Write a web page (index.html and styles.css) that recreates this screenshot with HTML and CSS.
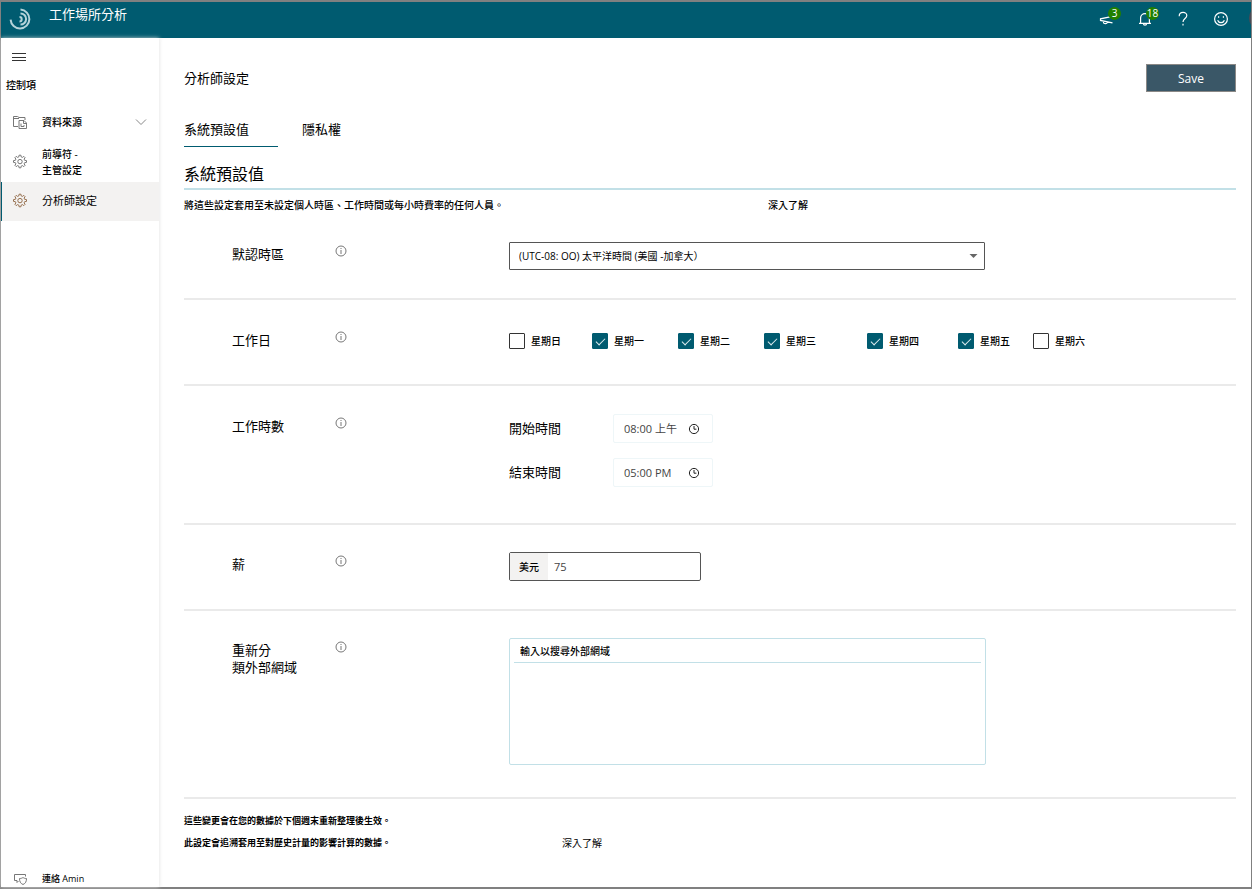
FILE: index.html
```html
<!DOCTYPE html>
<html lang="zh-Hant">
<head>
<meta charset="utf-8">
<meta name="viewport" content="width=device-width, initial-scale=1">
<title>工作場所分析</title>
<link rel="stylesheet" href="styles.css">
</head>
<body>
<svg class="defs" aria-hidden="true">
  <symbol id="gear" viewBox="0 0 16 16"><path d="M6.8 2.9 7.1 1.2h1.8l.3 1.7 1.2.5 1.4-1 1.3 1.3-1 1.4.5 1.2 1.9.3v1.8l-1.9.3-.5 1.2 1 1.4-1.3 1.3-1.4-1-1.2.5-.3 1.7H7.1l-.3-1.7-1.2-.5-1.4 1-1.3-1.3 1-1.4-.5-1.2-1.9-.3V6.6l1.9-.3.5-1.2-1-1.4 1.3-1.3 1.4 1z"/><circle cx="8" cy="7.6" r="2.2"/></symbol>
  <symbol id="info" viewBox="0 0 12 12"><circle cx="6" cy="6" r="5"/><path d="M6 5v4M6 3v1"/></symbol>
  <symbol id="clock" viewBox="0 0 12 12"><circle cx="6" cy="6" r="4.6"/><path d="M6 3v3.2h2.4"/></symbol>
</svg>
<div class="app">
  <header class="topbar">
    <svg class="logo" viewBox="0 0 22 22" aria-hidden="true"><path d="M11.500 1.600a9.400 9.400 0 1 1-9.900 10"/><path d="M11.500 5.400a5.600 5.600 0 0 1 0 11.200"/><path d="M10.500 9a2.200 2.200 0 0 1 0 4.400"/></svg>
    <span class="product">工作場所分析</span>
    <nav class="actions" aria-label="工具">
      <button class="action" aria-label="公告"><svg viewBox="0 0 16 16"><path d="M13.500 11.800 1.500 9.400V7.800l12-2.400M4.500 10v1.400c0 1.400 3.600 1.800 3.800-.2"/></svg><span class="badge">3</span></button>
      <button class="action" aria-label="通知"><svg viewBox="0 0 16 16"><path d="M2 12.400h12M3.600 12.200V7a4.400 4.400 0 0 1 8.800 0v5.200M6.400 12.600a1.600 1.600 0 0 0 3.200 0"/></svg><span class="badge">18</span></button>
      <button class="action" aria-label="說明"><svg viewBox="0 0 16 16"><path d="M4.200 5.200c0-5 7.600-5 7.600-.6C11.800 7.400 8 7.600 8 11M8 12.800v1.700"/></svg></button>
      <button class="action" aria-label="意見反應"><svg viewBox="0 0 16 16"><circle cx="8" cy="8" r="6.400"/><path d="M4.600 9.200c1.200 3.200 5.600 3.200 6.800 0M5.600 5.200v1.600M10.400 5.200v1.600"/></svg></button>
    </nav>
    <span class="avatar"></span>
  </header>
  <div class="body">
    <aside class="sidebar">
      <button class="menu" aria-label="選單"><svg viewBox="0 0 14 10"><path d="M0 1.500h14M0 5.500h14M0 8.500h14"/></svg></button>
      <p class="group">控制項</p>
      <nav class="nav">
        <a class="item" href="#"><svg class="icon" viewBox="0 0 16 16"><path d="M6 12.500H1.500v-10h4l1.500 1h6V6M1.500 4.500H7"/><path d="M7 6.500h5l2.500 2.500v5.500H7zM11.500 6.500v3h3M9 12.500v-3M9 12.500h3v-1.500"/></svg><span>資料來源</span><svg class="chevron" viewBox="0 0 12 8"><path d="m1 1.500 5 5 5-5"/></svg></a>
        <a class="item" href="#"><svg class="icon"><use href="#gear"/></svg><span>前導符 -<br>主管設定</span></a>
        <a class="item current" href="#" aria-current="page"><svg class="icon"><use href="#gear"/></svg><span>分析師設定</span></a>
      </nav>
      <a class="contact" href="#"><svg class="icon" viewBox="0 0 16 16"><path d="M5 9.500H2.500v-6h11v2M5 9.500v2l1.500-1.500"/><path d="M7.500 7.500c2 0 2.500-.5 3.500-1 1 .5 1.500 1 3.500 1 0 3-1 5-3.500 6-2.500-1-3.500-3-3.500-6z"/></svg><span>連絡 Amin</span></a>
    </aside>
    <main class="main">
      <div class="heading"><h1>分析師設定</h1><button class="save">Save</button></div>
      <div class="tabs" role="tablist"><button class="tab active" role="tab" aria-selected="true">系統預設值</button><button class="tab" role="tab" aria-selected="false">隱私權</button></div>
      <h2>系統預設值</h2>
      <p class="intro"><span>將這些設定套用至未設定個人時區、工作時間或每小時費率的任何人員。</span><a href="#">深入了解</a></p>

      <section class="row">
        <label class="name" for="zone">默認時區</label><svg class="info"><use href="#info"/></svg>
        <div class="zone"><select id="zone"><option>(UTC-08: OO) 太平洋時間 (美國 -加拿大）</option></select><svg class="caret" viewBox="0 0 8 4"><path d="M0 0h8L4 4z"/></svg></div>
      </section>
      <section class="row">
        <span class="name">工作日</span><svg class="info"><use href="#info"/></svg>
        <div class="days">
          <label><input type="checkbox">星期日</label>
          <label><input type="checkbox" checked>星期一</label>
          <label><input type="checkbox" checked>星期二</label>
          <label><input type="checkbox" checked>星期三</label>
          <label><input type="checkbox" checked>星期四</label>
          <label><input type="checkbox" checked>星期五</label>
          <label><input type="checkbox">星期六</label>
        </div>
      </section>
      <section class="row">
        <span class="name">工作時數</span><svg class="info"><use href="#info"/></svg>
        <div class="hours">
          <label for="start">開始時間</label><div class="time"><input id="start" type="text" value="08:00 上午"><svg><use href="#clock"/></svg></div>
          <label for="end">結束時間</label><div class="time"><input id="end" type="text" value="05:00 PM"><svg><use href="#clock"/></svg></div>
        </div>
      </section>
      <section class="row tight">
        <label class="name" for="rate">薪</label><svg class="info"><use href="#info"/></svg>
        <div class="rate"><span>美元</span><input id="rate" type="text" value="75"></div>
      </section>
      <section class="row tight last">
        <label class="name" for="domains">重新分<br>類外部網域</label><svg class="info"><use href="#info"/></svg>
        <div class="domains"><input id="domains" type="text" placeholder="輸入以搜尋外部網域"></div>
      </section>
      <footer class="notes">
        <p>這些變更會在您的數據於下個週末重新整理後生效。</p>
        <p><span>此設定會追溯套用至對歷史計量的影響計算的數據。</span><a href="#">深入了解</a></p>
      </footer>
    </main>
  </div>
</div>
</body>
</html>
```

FILE: styles.css
```css
* { box-sizing: border-box; }
body {
  margin: 0;
  background: #fff;
  color: #000;
  font: 10px/16px "Open Sans", "Noto Sans CJK TC", sans-serif;
}
h1, h2, p { margin: 0; font-weight: 400; }
a { color: inherit; text-decoration: none; }
button, input, select { font: inherit; color: inherit; margin: 0; padding: 0; border: 0; background: none; border-radius: 0; outline: 0; }
svg { fill: none; stroke: currentColor; stroke-width: 1; flex: none; }
.defs { position: absolute; width: 0; height: 0; }

.app {
  display: flex;
  flex-direction: column;
  min-height: calc(100vh - 2px);
  border: solid #808080;
  border-width: 2px 1px;
}
.topbar {
  position: relative;
  display: flex;
  align-items: center;
  height: 36px;
  padding: 0 22px 2px 8px;
  background: #005b70;
  color: #fff;
  overflow: hidden;
}
.logo { width: 22px; height: 22px; margin-right: 18px; stroke-width: 2; color: #b5d3da; }
.product { font-size: 13px; line-height: 16px; padding-bottom: 10px; }
.actions { display: flex; gap: 22px; margin-left: auto; }
.action { position: relative; width: 16px; height: 16px; }
.action svg { display: block; width: 16px; height: 16px; stroke-width: 1.2; }
.badge {
  position: absolute;
  top: -4px;
  left: 9px;
  width: 13px;
  height: 13px;
  border-radius: 50%;
  background: #218000;
  font-size: 10px;
  line-height: 13px;
  display: flex;
  justify-content: center;
}
.avatar { position: absolute; right: -22px; top: 4px; width: 24px; height: 24px; border-radius: 50%; background: #4a4a55; }

.body { display: flex; flex: 1; }
.sidebar {
  display: flex;
  flex-direction: column;
  width: 158px;
  flex: none;
  background: #fff;
  box-shadow: 0 0 4px rgba(220, 220, 220, .9);
  position: relative;
}
.menu { width: 14px; height: 10px; margin: 14px 0 0 11px; color: #333; }
.menu svg { display: block; width: 14px; height: 10px; }
.group { padding: 15px 0 9px 5px; font-weight: 500; }
.item { display: flex; align-items: center; height: 40px; padding: 0 12px 1px 11px; font-weight: 500; }
.icon { width: 16px; height: 16px; margin-right: 14px; color: #777; }
.chevron { width: 12px; height: 8px; margin-left: auto; color: #888; }
.current { height: 39px; font-size: 11px; font-weight: 400; padding-bottom: 2px; background: #f3f2f1; box-shadow: inset 1px 0 #005b70; }
.current .icon { color: #96704f; }
.contact { display: flex; align-items: center; margin-top: auto; padding-left: 11px; font-size: 9px; font-weight: 500; }

.main { flex: 1; min-width: 0; padding: 26px 15px 16px 25px; }
.heading { display: flex; justify-content: space-between; align-items: center; height: 28px; }
h1 { font-size: 13px; }
.save { width: 90px; height: 28px; padding-top: 1px; background: #3a5767; border: 1px solid #8a8886; color: #fff; font-size: 12px; }
.tabs { display: flex; gap: 24px; margin-top: 20px; }
.tab { height: 35px; padding: 0 29px 1px 0; font-size: 13px; text-align: left; border-bottom: 1px solid transparent; }
.tab.active { border-color: #005b70; }
h2 { padding: 15px 0 1px; font-size: 16px; line-height: 25px; border-bottom: 2px solid #c2e0e7; }
.intro { display: grid; grid-template-columns: 584px auto; height: 24px; padding-top: 7px; font-weight: 500; }

.row {
  display: grid;
  grid-template-columns: 103px 174px 1fr;
  align-items: start;
  padding: 28px 0 28px 48px;
  border-bottom: 2px solid #eaeaea;
}
.tight { padding-top: 27px; }
.last { padding-bottom: 32px; }
.name { padding-top: 4px; font-size: 13px; line-height: 17px; }
.info { width: 12px; height: 12px; margin-top: 3px; color: #777; }
.zone { position: relative; width: 476px; }
.zone select { display: block; width: 100%; height: 28px; padding: 0 9px; border: 1px solid #555; appearance: none; border-radius: 1px; }
.caret { position: absolute; right: 7px; top: 12px; width: 9px; height: 4px; color: #666; fill: currentColor; stroke: none; pointer-events: none; }
.days { display: grid; grid-template-columns: 83px 86px 86px 103px 91px 75px auto; height: 28px; padding-bottom: 2px; justify-content: start; align-items: center; font-weight: 500; }
.days label { display: flex; align-items: center; gap: 6px; }
.days input { appearance: none; display: grid; place-items: center; width: 16px; height: 16px; border: 1px solid #333; border-radius: 1px; }
.days input:checked { background: #005b70; border-color: #005b70; }
.days input:checked::before { content: ""; width: 8px; height: 4px; border: solid #dcebee; border-width: 0 0 1px 1px; transform: translateY(-1px) rotate(-45deg); }
.hours { display: grid; grid-template-columns: 104px 100px; row-gap: 15px; align-items: center; padding-bottom: 8px; font-size: 13px; }
.hours label { padding-bottom: 2px; }
.time { display: flex; align-items: center; height: 29px; padding: 0 12px 0 10px; border: 1px solid #eef6f8; border-radius: 2px; }
.time input { width: 64px; font-size: 11px; color: #444; }
.time svg { width: 12px; height: 12px; color: #222; }
.rate { display: flex; width: 192px; height: 29px; border: 1px solid #555; border-radius: 2px; }
.rate span { display: grid; place-items: center; width: 38px; background: #f3f2f1; font-weight: 500; }
.rate input { flex: 1; min-width: 0; padding-left: 6px; font-size: 11px; color: #444; }
.domains { width: 477px; height: 127px; padding: 0 4px; border: 1px solid #c2e0e7; border-radius: 2px; }
.domains input { display: block; width: 100%; height: 24px; padding-left: 6px; border-bottom: 1px solid #c2e0e7; font-weight: 500; }
.domains input::placeholder { color: #000; opacity: 1; }
.notes { padding-top: 14px; }
.notes p { display: grid; grid-template-columns: 378px auto; margin-bottom: 6px; font-size: 9px; font-weight: 700; }
.notes a { font-size: 10px; font-weight: 400; }
```
